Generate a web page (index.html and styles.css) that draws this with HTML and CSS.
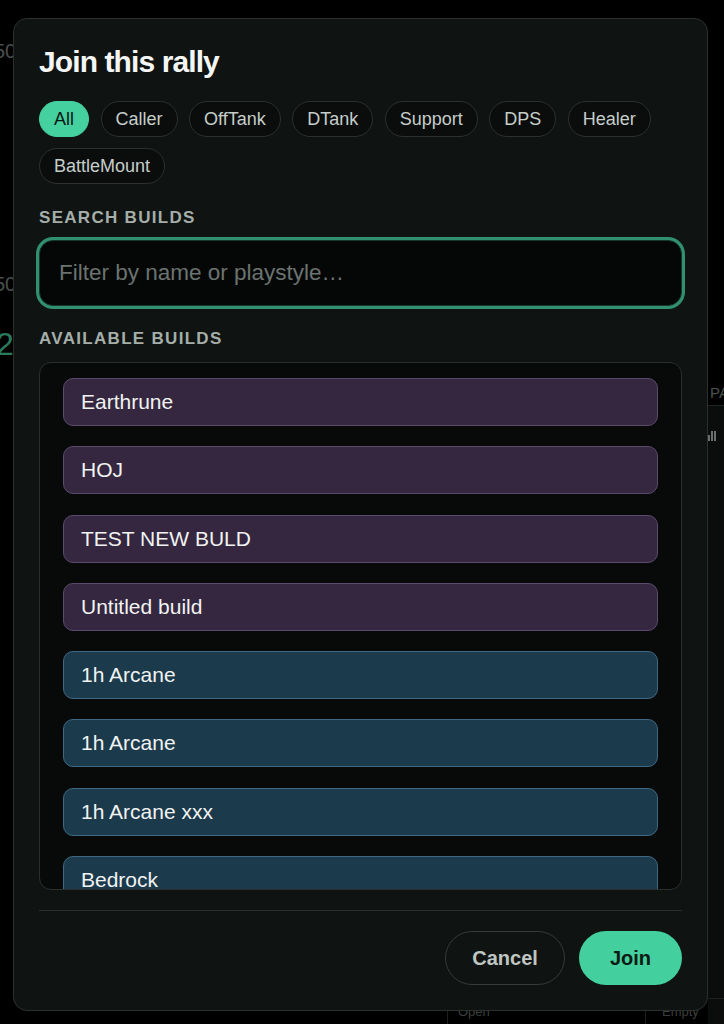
FILE: index.html
```html
<!DOCTYPE html>
<html lang="en">
<head>
    <meta charset="UTF-8">
    <meta name="viewport" content="width=device-width, initial-scale=1.0">
    <title>Join this rally</title>
    <link rel="stylesheet" href="styles.css">
</head>
<body>
    <!-- page behind the dialog, mostly hidden -->
    <div class="backdrop">
        <span class="bg-num bg-num-1">50</span>
        <span class="bg-num bg-num-2">50</span>
        <span class="bg-big">2</span>
        <div class="bg-panel">
            <span class="bg-pa">PA</span>
            <span class="bg-bars"><i></i><i></i><i></i></span>
        </div>
        <div class="bg-slot bg-slot-open">Open</div>
        <div class="bg-slot bg-slot-empty">Empty</div>
    </div>

    <div class="modal">
        <h1>Join this rally</h1>

        <div class="chips">
            <button class="chip active">All</button>
            <button class="chip">Caller</button>
            <button class="chip">OffTank</button>
            <button class="chip">DTank</button>
            <button class="chip">Support</button>
            <button class="chip">DPS</button>
            <button class="chip">Healer</button>
            <button class="chip">BattleMount</button>
        </div>

        <label class="section-label" for="search">Search builds</label>
        <input id="search" class="search" type="text" placeholder="Filter by name or playstyle…">

        <div class="section-label">Available builds</div>
        <div class="build-list">
            <div class="build purple">Earthrune</div>
            <div class="build purple">HOJ</div>
            <div class="build purple">TEST NEW BULD</div>
            <div class="build purple">Untitled build</div>
            <div class="build blue">1h Arcane</div>
            <div class="build blue">1h Arcane</div>
            <div class="build blue">1h Arcane xxx</div>
            <div class="build blue">Bedrock</div>
            <div class="build blue">Blazing</div>
        </div>

        <div class="divider"></div>

        <div class="actions">
            <button class="btn btn-cancel">Cancel</button>
            <button class="btn btn-join">Join</button>
        </div>
    </div>
</body>
</html>
```

FILE: styles.css
```css
* {
    box-sizing: border-box;
}
body {
    margin: 0;
    background: #000;
    font-family: "Liberation Sans", Arial, sans-serif;
    color: #f1f3f2;
    height: 1024px;
    overflow: hidden;
    position: relative;
}

/* background page */
.backdrop {
    position: absolute;
    inset: 0;
}
.bg-num {
    position: absolute;
    left: -6px;
    font-size: 20px;
    color: #4a4f4d;
}
.bg-num-1 {
    top: 40px;
}
.bg-num-2 {
    top: 273px;
}
.bg-big {
    position: absolute;
    left: -4px;
    top: 326px;
    font-size: 32px;
    color: #2a7a5e;
}
.bg-panel {
    position: absolute;
    left: 708px;
    top: 405px;
    width: 40px;
    height: 620px;
    background: #0a0d0c;
    border-top: 1px solid #1e2321;
}
.bg-pa {
    position: absolute;
    left: 2px;
    top: -22px;
    font-size: 15px;
    color: #4c5250;
}
.bg-bars {
    position: absolute;
    left: 0;
    top: 25px;
    display: flex;
    align-items: flex-end;
    gap: 1px;
}
.bg-bars i {
    display: block;
    width: 2px;
    height: 10px;
    background: #6a706e;
}
.bg-bars i:first-child {
    height: 6px;
}
.bg-slot {
    position: absolute;
    top: 998px;
    height: 40px;
    border: 1px solid #1c201e;
    font-size: 13px;
    color: #3a3f3d;
    padding: 5px 0 0 10px;
}
.bg-slot-open {
    left: 447px;
    width: 199px;
}
.bg-slot-empty {
    left: 645px;
    width: 100px;
    padding-left: 16px;
}

/* dialog */
.modal {
    position: relative;
    margin: 18px 0 0 13px;
    width: 695px;
    height: 993px;
    background: #0f1311;
    border: 1px solid #2b302d;
    border-radius: 14px;
    padding: 25px;
    display: flex;
    flex-direction: column;
}
h1 {
    margin: 0 0 21px;
    font-size: 30px;
    line-height: 36px;
    font-weight: 700;
    letter-spacing: -0.9px;
    color: #f4f6f5;
}
.chips {
    display: flex;
    flex-wrap: wrap;
    gap: 11px 11.5px;
    margin-bottom: 24px;
}
.chip {
    font-family: inherit;
    font-size: 18px;
    line-height: 22px;
    padding: 6px 14px;
    border-radius: 999px;
    border: 1px solid #2c312e;
    background: #0a0d0c;
    color: #c6cecA;
    cursor: pointer;
}
.chip.active {
    background: #44d09f;
    border-color: #44d09f;
    color: #0b1512;
}
.section-label {
    display: block;
    font-size: 17px;
    line-height: 20px;
    font-weight: 700;
    letter-spacing: 1.3px;
    text-transform: uppercase;
    color: #a5aea9;
    margin-bottom: 12px;
}
.search {
    display: block;
    width: 100%;
    height: 66px;
    margin-bottom: 23px;
    padding: 0 19px;
    font-family: inherit;
    font-size: 22.5px;
    color: #e6ebe8;
    background: #050706;
    border: 1px solid #17372b;
    border-radius: 14px;
    box-shadow: 0 0 0 3px #31906f;
    outline: none;
}
.search::placeholder {
    color: #6b7370;
}
.section-label + .build-list {
    margin-top: 1px;
}
.build-list {
    height: 528px;
    flex-shrink: 0;
    overflow: hidden;
    background: #070a09;
    border: 1px solid #2a2f2c;
    border-radius: 12px;
    padding: 15px 23px;
    display: flex;
    flex-direction: column;
    gap: 20.3px;
}
.build {
    flex-shrink: 0;
    height: 48px;
    display: flex;
    align-items: center;
    padding: 0 17px;
    border-radius: 10px;
    border: 1px solid;
    font-size: 21px;
    color: #f1f3f2;
}
.build.purple {
    background: #35273f;
    border-color: #5c4a6c;
}
.build.blue {
    background: #1b3a4b;
    border-color: #3e6883;
}
.divider {
    height: 1px;
    background: #2a2f2c;
    margin: 20px 0;
}
.actions {
    display: flex;
    justify-content: flex-end;
    gap: 14px;
}
.btn {
    height: 54px;
    font-family: inherit;
    font-size: 20px;
    font-weight: 700;
    border-radius: 999px;
    cursor: pointer;
}
.btn-cancel {
    padding: 0 26px;
    background: transparent;
    border: 1px solid #353b38;
    color: #bfc5c2;
}
.btn-join {
    padding: 0 31px;
    background: #43d09e;
    border: none;
    color: #0c1a14;
}
```
